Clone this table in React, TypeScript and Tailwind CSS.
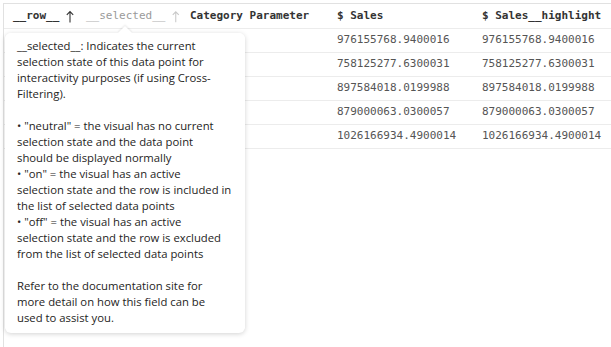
import React from "react";

const rows = [
  "976155768.9400016",
  "758125277.6300031",
  "897584018.0199988",
  "879000063.0300057",
  "1026166934.4900014",
];

const tipLines = [
  "__selected__: Indicates the current",
  "selection state of this data point for",
  "interactivity purposes (if using Cross-",
  "Filtering).",
  "",
  "• \"neutral\" = the visual has no current",
  "selection state and the data point",
  "should be displayed normally",
  "• \"on\" = the visual has an active",
  "selection state and the row is included in",
  "the list of selected data points",
  "• \"off\" = the visual has an active",
  "selection state and the row is excluded",
  "from the list of selected data points",
  "",
  "Refer to the documentation site for",
  "more detail on how this field can be",
  "used to assist you.",
];

function UpArrow({ color }: { color: string }) {
  return (
    <svg width="8" height="13" viewBox="0 0 8 13" className="ml-[7px]">
      <path d="M4 1.5V12.5M0.8 4.8L4 1.5L7.2 4.8" fill="none" stroke={color} strokeWidth="1.1" />
    </svg>
  );
}

export default function App() {
  return (
    <div className="relative w-[611px] h-[347px] overflow-hidden bg-white pl-[3px] pt-[3px]">
      {/* table */}
      <div className="h-full border-l border-t border-[#e1e1e1] font-['DejaVu_Sans_Mono',monospace] text-[11px]">
        <div className="flex h-[25px] items-center border-b border-[#ececec] font-semibold text-[#333]">
          <div className="flex w-[72px] items-center pl-[9px]">
            __row__
            <UpArrow color="#333" />
          </div>
          <div className="flex w-[104px] items-center pl-[10px] font-normal text-[#9a9a9a]">
            __selected__
            <UpArrow color="#c8c8c8" />
          </div>
          <div className="w-[147px] pl-[10px]">Category Parameter</div>
          <div className="w-[145px] pl-[10px]">$ Sales</div>
          <div className="flex-1 whitespace-nowrap pl-[10px]">$ Sales__highlight</div>
        </div>
        {rows.map((v) => (
          <div key={v} className="flex h-[24px] items-center border-b border-[#ececec] text-[#555]">
            <div className="w-[72px]" />
            <div className="w-[104px]" />
            <div className="w-[147px]" />
            <div className="w-[145px] pl-[10px]">{v}</div>
            <div className="flex-1 whitespace-nowrap pl-[10px]">{v}</div>
          </div>
        ))}
      </div>

      {/* tooltip */}
      <div className="absolute left-[5px] top-[33px] w-[240px] h-[300px] rounded-md bg-white shadow-[0_1px_5px_rgba(0,0,0,0.18)]">
        <div className="absolute left-[115px] top-[-5px] h-[10px] w-[10px] rotate-45 bg-white shadow-[-1px_-1px_2px_rgba(0,0,0,0.08)]" />
        <div className="relative rounded-md bg-white px-[12px] pt-[5px] pb-[6px] font-['Open_Sans',sans-serif] text-[11.3px] leading-[16px] text-[#252423]">
          {tipLines.map((l, i) => (
            <div key={i} className="h-[16px] whitespace-nowrap">
              {l}
            </div>
          ))}
        </div>
      </div>
    </div>
  );
}
